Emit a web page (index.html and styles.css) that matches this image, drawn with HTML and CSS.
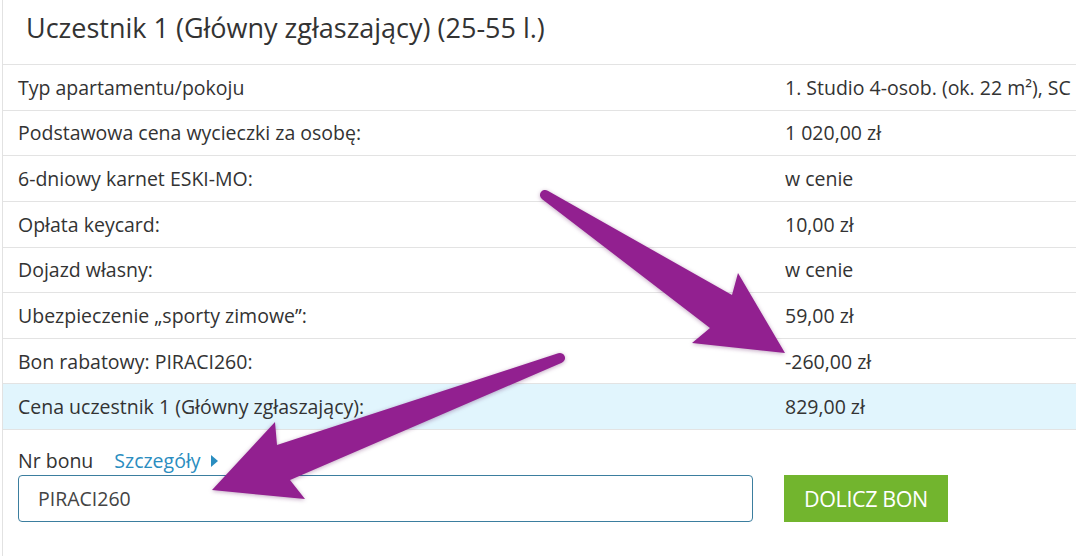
FILE: index.html
```
<!DOCTYPE html>
<html lang="pl">
<head>
<meta charset="utf-8">
<title>Uczestnik 1</title>
<link rel="stylesheet" href="styles.css">
</head>
<body>
<div class="page">
  <div class="panel">
    <h2 class="title">Uczestnik 1 (Główny zgłaszający) (25-55 l.)</h2>
    <div class="rows">
      <div class="row"><span class="lbl">Typ apartamentu/pokoju</span><span class="val">1. Studio 4-osob. (ok. 22 m²), SC</span></div>
      <div class="row"><span class="lbl">Podstawowa cena wycieczki za osobę:</span><span class="val">1 020,00 zł</span></div>
      <div class="row"><span class="lbl">6-dniowy karnet ESKI-MO:</span><span class="val">w cenie</span></div>
      <div class="row"><span class="lbl">Opłata keycard:</span><span class="val">10,00 zł</span></div>
      <div class="row"><span class="lbl">Dojazd własny:</span><span class="val">w cenie</span></div>
      <div class="row"><span class="lbl">Ubezpieczenie „sporty zimowe”:</span><span class="val">59,00 zł</span></div>
      <div class="row"><span class="lbl">Bon rabatowy: PIRACI260:</span><span class="val">-260,00 zł</span></div>
      <div class="row row-total"><span class="lbl">Cena uczestnik 1 (Główny zgłaszający):</span><span class="val">829,00 zł</span></div>
    </div>
    <div class="bon">
      <div class="bon-label">
        <span>Nr bonu</span>
        <a class="details" href="#">Szczegóły <span class="tri"></span></a>
      </div>
      <div class="bon-row">
        <input class="bon-input" type="text" value="PIRACI260">
        <button class="bon-btn" type="button">DOLICZ BON</button>
      </div>
    </div>
  </div>
  <svg class="arrows" width="1076" height="556" viewBox="0 0 1076 556" aria-hidden="true">
    <path d="M547.75,190.8 L732,295 L738,273 L785,353 L692,343 L710,328 L542.25,199.2 A5,5 0 0 1 547.75,190.8 Z"/>
    <path d="M558.2,353.3 L277,445 L275,422 L212,490 L305,499 L290,480 L561.8,362.7 A5,5 0 0 0 558.2,353.3 Z"/>
  </svg>
</div>
</body>
</html>
```
FILE: styles.css
```
html, body {
  margin: 0;
  padding: 0;
  background: #ffffff;
}
body {
  font-family: "Open Sans", "Liberation Sans", sans-serif;
  color: #333333;
  width: 1076px;
  height: 556px;
  overflow: hidden;
}
.page {
  position: relative;
  width: 1076px;
  height: 556px;
}
.panel {
  margin-left: 2px;
  border-left: 1px solid #e2e2e2;
  height: 556px;
  box-sizing: border-box;
}
.title {
  margin: 0;
  height: 64px;
  box-sizing: border-box;
  padding: 9px 0 0 23px;
  font-size: 27px;
  font-weight: 400;
  line-height: 38px;
  color: #333333;
}
.rows {
  border-bottom: 1px solid #e3e3e3;
}
.row {
  display: grid;
  grid-template-columns: 767px 1fr;
  align-items: center;
  height: 45.625px;
  box-sizing: border-box;
  border-top: 1px solid #e3e3e3;
  padding-left: 15px;
  font-size: 19.5px;
  white-space: nowrap;
}
.row-total {
  background: #e1f5fd;
}
.val {
  overflow: hidden;
}
.bon {
  padding: 17px 0 0 15px;
}
.bon-label {
  display: flex;
  align-items: center;
  gap: 21px;
  font-size: 19.5px;
  line-height: 28px;
  margin-bottom: 0;
}
.details {
  color: #2a8dc0;
  text-decoration: none;
  display: flex;
  align-items: center;
  gap: 10px;
}
.tri {
  width: 0;
  height: 0;
  border-top: 6px solid transparent;
  border-bottom: 6px solid transparent;
  border-left: 7px solid #2a8dc0;
}
.bon-row {
  display: flex;
  align-items: center;
  gap: 31px;
}
.bon-input {
  width: 735px;
  height: 47px;
  box-sizing: border-box;
  border: 1px solid #3b7e9f;
  border-radius: 4px;
  padding: 0 19px;
  font-family: "Open Sans", "Liberation Sans", sans-serif;
  font-size: 19.5px;
  color: #444444;
  background: #ffffff;
  outline: none;
}
.bon-btn {
  width: 164px;
  height: 47px;
  border: none;
  background: #72b52e;
  color: #ffffff;
  font-family: "Open Sans", "Liberation Sans", sans-serif;
  font-size: 21.5px;
  padding: 0;
  letter-spacing: -0.4px;
}
.arrows {
  position: absolute;
  left: 0;
  top: 0;
  pointer-events: none;
  fill: #922090;
  filter: drop-shadow(0 1px 2px rgba(80, 0, 80, 0.35));
}
```
